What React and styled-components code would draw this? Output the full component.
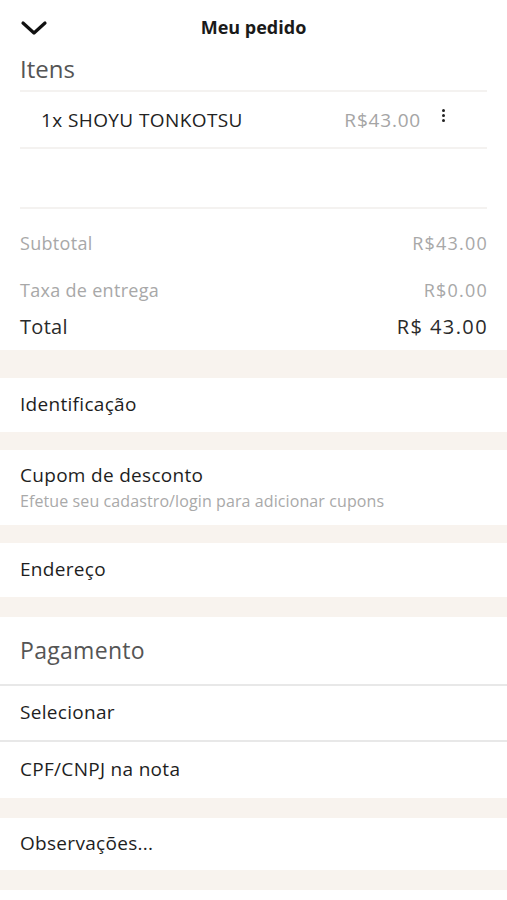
import React from 'react'
import styled, { createGlobalStyle } from 'styled-components'

const GlobalStyle = createGlobalStyle`
  body {
    margin: 0;
    background: #fff;
    font-family: "Open Sans", Lato, sans-serif;
    color: #222;
  }
`

const Page = styled.div`
  width: 507px;
  min-height: 900px;
  background: #fff;
`

const Header = styled.header`
  position: relative;
  height: 54px;
  display: flex;
  align-items: center;
  justify-content: center;
`

const BackButton = styled.button`
  position: absolute;
  left: 20px;
  top: 19px;
  border: 0;
  padding: 0;
  background: none;
  display: flex;
`

const Title = styled.h1`
  margin: 0;
  font-size: 18px;
  font-weight: 700;
  color: #1a1a1a;
`

const Section = styled.section`
  padding: 0 20px;
`

const SectionTitle = styled.h2`
  margin: 0;
  font-size: 24px;
  font-weight: 400;
  color: #555;
  line-height: 34px;
  margin-top: -2px;
  padding-bottom: 4px;
`

const ItemsList = styled.div`
  border-top: 2px solid #f4f2f0;
  border-bottom: 2px solid #f4f2f0;
  height: 115px;
`

const ItemRow = styled.div`
  display: flex;
  align-items: center;
  height: 55px;
  padding-left: 21px;
  border-bottom: 2px solid #f4f2f0;
  font-size: 19px;
  color: #222;
`

const ItemName = styled.span`
  flex: 1;
  letter-spacing: 0.4px;
`

const ItemPrice = styled.span`
  color: #a5a5a5;
  margin-right: 12px;
  letter-spacing: 0.8px;
`

const Dots = styled.span`
  display: flex;
  flex-direction: column;
  gap: 2px;
  width: 20px;
  margin-right: 34px;
  align-items: center;
  margin-top: -8px;

  i {
    width: 3px;
    height: 3px;
    border-radius: 50%;
    background: #222;
  }
`

const Totals = styled.div`
  padding: 10px 0 11px;
`

const TotalRow = styled.div`
  display: flex;
  justify-content: space-between;
  align-items: center;
  height: ${p => (p.$strong ? '26px' : '47px')};
  font-size: ${p => (p.$strong ? '20px' : '18px')};
  color: ${p => (p.$strong ? '#2a2a2a' : '#a8a8a8')};
  letter-spacing: 0.3px;
`

const Amount = styled.span`
  letter-spacing: ${p => (p.$strong ? '1.4px' : '1.2px')};
  margin-right: -1px;
`

const Band = styled.div`
  height: ${p => p.$h || 28}px;
  background: #f8f3ee;
`

const Row = styled.div`
  display: flex;
  flex-direction: column;
  justify-content: center;
  padding: 0 20px 2px;
  height: ${p => p.$h || 54}px;
  border-bottom: ${p => (p.$line ? '2px solid #e8e8e8' : 'none')};
  box-sizing: border-box;
`

const RowLabel = styled.span`
  font-size: 19px;
  letter-spacing: 0.3px;
  color: #1e1e1e;
`

const RowHint = styled.span`
  font-size: 16px;
  letter-spacing: 0.1px;
  color: #a9a9a9;
  margin-top: 2px;
`

const Head = styled.span`
  font-size: 23px;
  letter-spacing: 0.3px;
  color: #555;
`

export default function App() {
  return (
    <Page>
      <GlobalStyle />
      <Header>
        <BackButton aria-label="Voltar">
          <svg width="28" height="18" viewBox="0 0 28 18">
            <path d="M3 4 L14 14 L25 4" fill="none" stroke="#111" strokeWidth="3.2" strokeLinecap="round" strokeLinejoin="round" />
          </svg>
        </BackButton>
        <Title>Meu pedido</Title>
      </Header>
      <Section>
        <SectionTitle>Itens</SectionTitle>
        <ItemsList>
          <ItemRow>
            <ItemName>1x SHOYU TONKOTSU</ItemName>
            <ItemPrice>R$43.00</ItemPrice>
            <Dots><i /><i /><i /></Dots>
          </ItemRow>
        </ItemsList>
        <Totals>
          <TotalRow>
            <span>Subtotal</span>
            <Amount>R$43.00</Amount>
          </TotalRow>
          <TotalRow>
            <span>Taxa de entrega</span>
            <Amount>R$0.00</Amount>
          </TotalRow>
          <TotalRow $strong>
            <span>Total</span>
            <Amount $strong>R$ 43.00</Amount>
          </TotalRow>
        </Totals>
      </Section>
      <Band $h={28} />
      <Row $h={54}>
        <RowLabel>Identificação</RowLabel>
      </Row>
      <Band $h={18} />
      <Row $h={75}>
        <RowLabel>Cupom de desconto</RowLabel>
        <RowHint>Efetue seu cadastro/login para adicionar cupons</RowHint>
      </Row>
      <Band $h={18} />
      <Row $h={54}>
        <RowLabel>Endereço</RowLabel>
      </Row>
      <Band $h={20} />
      <Row $h={69} $line>
        <Head>Pagamento</Head>
      </Row>
      <Row $h={56} $line>
        <RowLabel>Selecionar</RowLabel>
      </Row>
      <Row $h={56}>
        <RowLabel>CPF/CNPJ na nota</RowLabel>
      </Row>
      <Band $h={20} />
      <Row $h={52}>
        <RowLabel>Observações...</RowLabel>
      </Row>
      <Band $h={20} />
    </Page>
  )
}
